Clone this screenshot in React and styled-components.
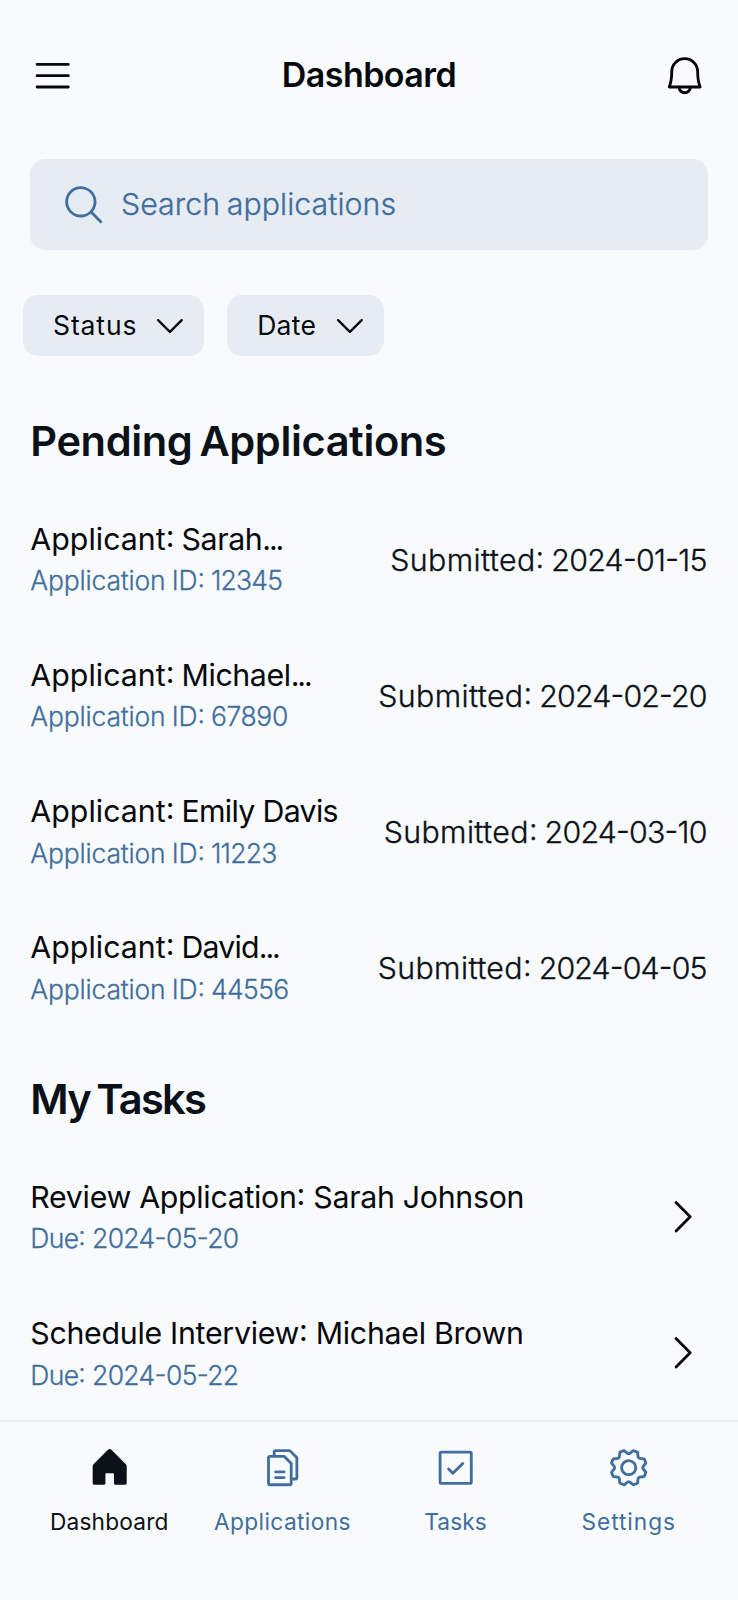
import React from 'react';
import styled, { createGlobalStyle } from 'styled-components';
import {
  PiList,
  PiMagnifyingGlass,
  PiCaretDown,
  PiCaretRight,
  PiHouseFill,
  PiFiles,
  PiCheckSquare,
  PiGear,
} from 'react-icons/pi';

const ink = '#0b1118';
const blue = '#406f9d';
const fill = '#e7ecf3';
const surface = '#f9fafc';

const GlobalStyle = createGlobalStyle`
  *, *::before, *::after { box-sizing: border-box; }
  body {
    margin: 0;
    background: ${surface};
    color: ${ink};
    font-family: Inter, "Open Sans", sans-serif;
    font-feature-settings: "calt" 1, "case" 1;
  }
  svg { display: block; flex-shrink: 0; }
`;

const Screen = styled.div`
  display: flex;
  flex-direction: column;
  width: 738px;
  height: 1600px;
  overflow: hidden;
  background: ${surface};
`;

const Content = styled.main`
  flex: 1;
  min-height: 0;
  overflow: hidden;
`;

const Text = styled.span`
  letter-spacing: ${(p) => p.$track || 0}px;
  word-spacing: ${(p) => p.$word || 0}px;
  white-space: nowrap;
`;

const Header = styled.header`
  display: flex;
  align-items: center;
  justify-content: space-between;
  height: 136.2px;
  padding: 30.3px 30.3px 15.1px;
  font-size: 45.4px;
  color: #05080c;
`;

const Title = styled(Text).attrs({ as: 'h1' })`
  margin: 0;
  padding-bottom: 2px;
  font-size: 34px;
  font-weight: 600;
  line-height: 44px;
`;

const SearchSection = styled.section`
  padding: 22.7px 30.3px;
`;

const SearchBox = styled.label`
  display: flex;
  align-items: center;
  gap: 15px;
  height: 90.8px;
  padding-left: 30.3px;
  border-radius: 15px;
  background: ${fill};
  color: ${blue};
  font-size: 30.3px;
  font-weight: 300;
  -webkit-text-stroke: 0.35px ${blue};

  svg { font-size: 45.4px; }
`;

const Filters = styled.div`
  display: flex;
  gap: 22.7px;
  padding: 22.7px;
`;

const Chip = styled.button`
  display: flex;
  align-items: center;
  justify-content: space-between;
  width: ${(p) => p.$width}px;
  height: 60.5px;
  padding: 0 15.1px 0 30.3px;
  border: 0;
  border-radius: 15px;
  background: ${fill};
  color: #05080c;
  font: 400 26.5px Inter, "Open Sans", sans-serif;

  svg { font-size: 37.8px; }
`;

const SectionTitle = styled(Text).attrs({ as: 'h2' })`
  display: block;
  height: 113.5px;
  margin: 0;
  padding: 36.4px 30.3px 0;
  font-size: 41.6px;
  font-weight: 600;
  line-height: 52px;
`;

const Row = styled.div`
  display: flex;
  align-items: center;
  justify-content: space-between;
  height: 136.2px;
  padding: 0 30.3px;
`;

const RowBody = styled.div`
  display: flex;
  flex-direction: column;
  padding-bottom: 3px;
`;

const RowTitle = styled(Text)`
  color: #05080c;
  font-size: 30.3px;
  font-weight: 400;
  line-height: 45.4px;
`;

const RowMeta = styled(Text)`
  color: ${blue};
  font-size: 26.5px;
  font-weight: 300;
  line-height: 37.7px;
  -webkit-text-stroke: 0.3px ${blue};
`;

const Submitted = styled.div`
  padding-top: 1.5px;
  padding-right: 1px;
  white-space: pre;
  font-size: 30.3px;
  font-weight: 300;
  line-height: 45.4px;
  -webkit-text-stroke: 0.35px ${ink};
`;

const Chevron = styled.div`
  display: flex;
  justify-content: center;
  width: 53px;
  padding-bottom: 3px;
  color: #05080c;
  font-size: 45.4px;
`;

const TabBar = styled.nav`
  display: flex;
  gap: 15.1px;
  height: 179.7px;
  padding: 15.1px 30.3px 0;
  border-top: 2px solid ${fill};
`;

const Tab = styled.a`
  display: flex;
  flex: 1;
  flex-direction: column;
  align-items: center;
  gap: 6.6px;
  color: ${(p) => (p.$active ? ink : blue)};
  font-size: 22.7px;
  line-height: 34px;
`;

const TabIcon = styled.div`
  display: flex;
  align-items: center;
  height: 60.5px;
  font-size: 45.4px;
`;

const applications = [
  { name: 'Sarah', nameTrack: -0.4, cut: true, id: '12345', idTrack: -0.8, date: '2024-01-15', dateTrack: -0.7 },
  { name: 'Michael', nameTrack: -0.4, cut: true, id: '67890', idTrack: -0.4, date: '2024-02-20', dateTrack: -0.8 },
  { name: 'Emily Davis', nameTrack: -0.68, id: '11223', idTrack: -0.8, date: '2024-03-10', dateTrack: -0.75 },
  { name: 'David', nameTrack: -0.8, cut: true, id: '44556', idTrack: -0.6, date: '2024-04-05', dateTrack: -0.83 },
];

const tasks = [
  { name: 'Review Application: Sarah Johnson', track: -0.29, due: '2024-05-20', dueTrack: -0.65 },
  { name: 'Schedule Interview: Michael Brown', track: -0.28, due: '2024-05-22', dueTrack: -0.65 },
];

const tabs = [
  { label: 'Dashboard', Icon: PiHouseFill, track: 0.2, active: true },
  { label: 'Applications', Icon: PiFiles, track: 0.38 },
  { label: 'Tasks', Icon: PiCheckSquare, track: 0.09 },
  { label: 'Settings', Icon: PiGear, track: 0.95 },
];

function BellIcon() {
  return (
    <svg
      width="1em"
      height="1em"
      viewBox="0 0 256 256"
      fill="none"
      stroke="currentColor"
      strokeWidth="16"
      strokeLinecap="round"
      strokeLinejoin="round"
    >
      <path d="M55 105a73 73 0 0 1 146 0c0 35 7 69 14 87H41c7-18 14-52 14-87Z" />
      <path d="M96 193a32 31 0 0 0 64 0" />
    </svg>
  );
}

export default function App() {
  return (
    <>
      <GlobalStyle />
      <Screen>
        <Content>
          <Header>
            <PiList />
            <Title $track={-0.55}>Dashboard</Title>
            <BellIcon />
          </Header>
          <SearchSection>
            <SearchBox>
              <PiMagnifyingGlass />
              <Text $track={0.06} $word={-2}>Search applications</Text>
            </SearchBox>
          </SearchSection>
          <Filters>
            <Chip $width={181.5}>
              <Text $track={0.9}>Status</Text>
              <PiCaretDown />
            </Chip>
            <Chip $width={157}>
              <Text $track={0.3}>Date</Text>
              <PiCaretDown />
            </Chip>
          </Filters>
          <SectionTitle $track={-0.4} $word={-3}>Pending Applications</SectionTitle>
          {applications.map((a) => (
            <Row key={a.id}>
              <RowBody>
                <RowTitle>
                  <Text $track={0.03} $word={-1.5}>Applicant: </Text>
                  <Text $track={a.nameTrack}>{a.name}</Text>
                  {a.cut && <Text $track={-2.1}>...</Text>}
                </RowTitle>
                <RowMeta>
                  <Text $track={-0.18} $word={-1}>Application ID: </Text>
                  <Text $track={a.idTrack}>{a.id}</Text>
                </RowMeta>
              </RowBody>
              <Submitted>
                <Text $track={0.4} $word={-2.2}>Submitted: </Text>
                <Text $track={a.dateTrack}>{a.date}</Text>
              </Submitted>
            </Row>
          ))}
          <SectionTitle $track={-1.75} $word={-2.5}>My Tasks</SectionTitle>
          {tasks.map((t) => (
            <Row key={t.name}>
              <RowBody>
                <RowTitle $track={t.track}>{t.name}</RowTitle>
                <RowMeta $track={t.dueTrack}>Due: {t.due}</RowMeta>
              </RowBody>
              <Chevron>
                <PiCaretRight />
              </Chevron>
            </Row>
          ))}
        </Content>
        <TabBar>
          {tabs.map(({ label, Icon, track, active }) => (
            <Tab key={label} $active={active}>
              <TabIcon>
                <Icon />
              </TabIcon>
              <Text $track={track}>{label}</Text>
            </Tab>
          ))}
        </TabBar>
      </Screen>
    </>
  );
}
